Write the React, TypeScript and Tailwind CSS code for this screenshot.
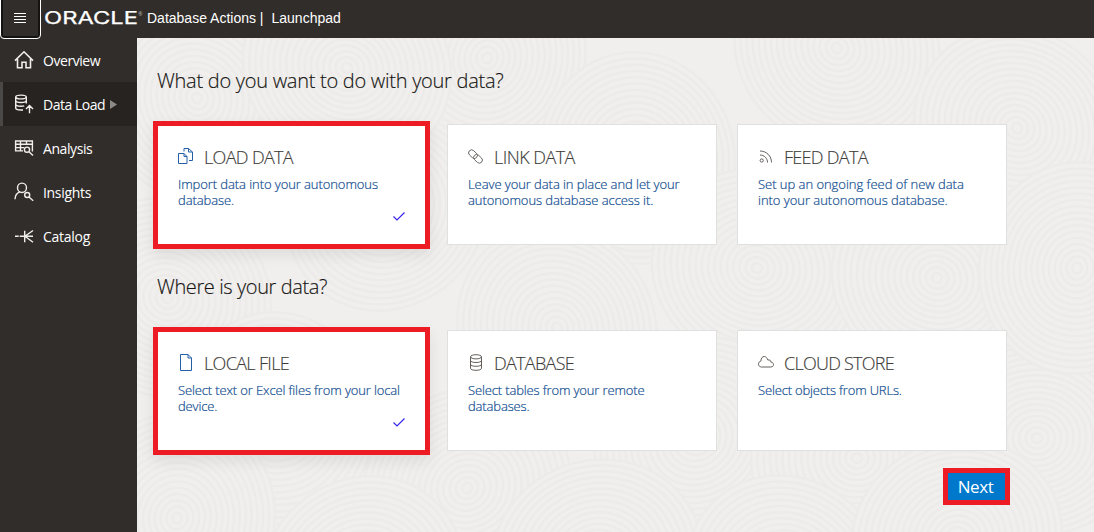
import type { ReactNode } from 'react';

function NavIcon({ children }: { children: ReactNode }) {
  return (
    <svg width="20" height="20" viewBox="0 0 20 20" fill="none" stroke="#f1efed" strokeWidth="1.4" className="shrink-0">
      {children}
    </svg>
  );
}

function CardIcon({ children, active }: { children: ReactNode; active?: boolean }) {
  return (
    <svg width="16" height="18" viewBox="0 0 16 18" fill="none" strokeWidth="1" className={active ? 'shrink-0 stroke-[#2560a6]' : 'shrink-0 stroke-[#65605c]'}>
      {children}
    </svg>
  );
}

const nav = [
  {
    label: 'Overview',
    tracking: 'tracking-[-0.45px]',
    icon: <path d="M1 10.6 10 1.800l9 8.800M3.500 9v8.800H8v-5.500h4v5.500h4.500V9" strokeWidth="1.600" />,
  },
  {
    label: 'Data Load',
    tracking: 'tracking-[-0.48px]',
    active: true,
    icon: (
      <>
        <ellipse cx="7" cy="3" rx="5.300" ry="1.900" />
        <path d="M1.700 3v11c0 1.200 2.200 2 5.300 2h2M12.300 3v6.500M1.700 6.500c0 1.200 2.300 2 5.300 2s5.300-.8 5.300-2M1.700 10.200c0 1.200 2.300 2 5.300 2 1.300 0 2.300-.1 3.200-.4M15.500 19.300v-7.500M12 15l3.500-3.500L19 15" />
      </>
    ),
  },
  {
    label: 'Analysis',
    tracking: 'tracking-[-0.42px]',
    icon: (
      <>
        <path d="M1 3h18M1 6.300h18M1 9.600h9M1 12.900h8M1.600 2.500v11M6.500 3v10.500M12.500 3v4M18.400 2.500v11" />
        <circle cx="13" cy="11.700" r="2.600" />
        <path d="m15 13.700 4 3.800" />
      </>
    ),
  },
  {
    label: 'Insights',
    tracking: 'tracking-[-0.32px]',
    icon: (
      <>
        <ellipse cx="8" cy="5.800" rx="4.500" ry="4.700" />
        <path d="M1 17.200c.2-3.800 1.900-6.400 4.800-7.400" />
        <circle cx="13.200" cy="13" r="2.500" />
        <path d="m15 15 4.200 3.800" />
      </>
    ),
  },
  {
    label: 'Catalog',
    tracking: 'tracking-[-0.27px]',
    icon: <path d="M1 10.300h3.700M5.700 10.300H19M10.700 4.800v11.500M19 4.500l-8 5.800 8 6" />,
  },
];

const files = <path d="M.5 5.500h5.500l3 3v7h-8.500ZM6 5.500v3h3M6 3.500v-3h4.500l4 3.500v8.500H11M10.500.5V4h4" />;
const file = <path d="M2.500 .500h7.500l3.500 3.500v12.500h-11ZM10 .500V4h3.500" />;
const link = (
  <g transform="rotate(43 7.5 8.500)" strokeWidth="0.9">
    <rect x="-0.800" y="5.500" width="9.800" height="6" rx="3" />
    <rect x="6" y="5.500" width="9.800" height="6" rx="3" />
  </g>
);
const feed = (
  <g>
    <circle cx="3.700" cy="12.500" r="1.600" />
    <path d="M2 7c4.200 0 7.500 3.200 7.500 7.500M2 3c6.500 0 11.500 5 11.500 11.500" />
  </g>
);
const database = (
  <g>
    <ellipse cx="8" cy="2.800" rx="5.500" ry="2.100" />
    <path d="M2.500 2.800v11.500c0 1.200 2.400 2 5.500 2s5.500-.8 5.500-2V2.800M2.500 6.500c0 1.200 2.400 2 5.500 2s5.500-.8 5.500-2M2.500 10.300c0 1.200 2.400 2 5.500 2s5.500-.8 5.500-2" />
  </g>
);
const cloud = (
  <path
    transform="translate(0 -1)"
    d="M3.500 14h9.300c1.600 0 2.700-1 2.700-2.400 0-1.500-1.100-2.500-2.600-2.500.1-1.700-1.600-2.700-3-2C9 5 7.900 3.500 6.400 3.500c-2 0-3.500 1.600-3.400 4.400C1.400 8.500.5 9.600.5 11.200.5 12.900 1.800 14 3.500 14Z"
  />
);

type CardProps = {
  title: string;
  titleTracking: string;
  lines: string[];
  tracking: string;
  icon: ReactNode;
  selected?: boolean;
};

function Card({ title, titleTracking, lines, tracking, icon, selected }: CardProps) {
  return (
    <button
      className={`flex flex-col bg-white text-left font-light ${
        selected
          ? '-my-1 mr-[-3px] -ml-1 h-[128px] w-[277px] border-[5px] border-[#ed1c24] pt-[20px] pl-[20px] shadow-[0_6px_14px_rgba(0,0,0,0.08)]'
          : 'my-[-1px] h-[121px] w-[270px] border border-[#dfe1e0] pt-[21px] pl-[20px]'
      }`}
    >
      <span className="flex h-[22px] items-center gap-[10px]">
        <CardIcon active={selected}>{icon}</CardIcon>
        <span className={`text-[18px] leading-[22px] text-[#403c38] [-webkit-text-stroke:0.15px] ${titleTracking}`}>{title}</span>
      </span>
      <span className={`mt-[8px] flex flex-col text-[13px] leading-4 text-[#0f4c8f] [-webkit-text-stroke:0.2px] ${tracking}`}>
        {lines.map((l) => (
          <span key={l} className="whitespace-nowrap">{l}</span>
        ))}
      </span>
      {selected && (
        <svg width="12" height="9" viewBox="0 0 12 9" fill="none" stroke="#3524f0" strokeWidth="1.200" className="mt-1 mr-[20px] self-end">
          <path d="m.500 4.500 3.500 3.500 7.500-7.500" />
        </svg>
      )}
    </button>
  );
}

const rings = Array.from({ length: 17 }, (_, i) => 106 - i * 6.3);
const centers = [
  [60, 60], [350, 20], [500, 120], [700, 10], [880, 90], [250, 170], [30, 260], [420, 290],
  [620, 230], [800, 240], [140, 380], [560, 400], [720, 420], [330, 450], [40, 480], [900, 400],
  [460, 520], [650, 540], [225, 540], [820, 500], [210, 30], [940, 230],
];

function Backdrop() {
  return (
    <svg className="absolute inset-0 h-full w-full" viewBox="0 0 957 494" aria-hidden="true">
      <rect width="957" height="494" fill="#f0efed" />
      {centers.map(([x, y]) => (
        <g key={`${x}-${y}`} fill="#f0efed" stroke="#ecebe9" strokeWidth="2.400">
          {rings.map((r) => (
            <ellipse key={r} cx={x} cy={y} rx={r} ry={r * 0.92} transform={`rotate(${(x * 7) % 180} ${x} ${y})`} />
          ))}
        </g>
      ))}
    </svg>
  );
}

export default function App() {
  return (
    <div className="flex h-[532px] w-[1094px] flex-col overflow-hidden bg-[#312d2a] font-['Open_Sans',sans-serif]">
      <header className="flex h-[38px] shrink-0 items-start text-white">
        <button className="-mt-1 flex h-[43px] w-[41px] shrink-0 items-center justify-center rounded border border-white bg-[#312d2a] pt-px pr-px shadow-[inset_0_0_0_2px_#151312]" aria-label="Menu">
          <svg width="12" height="11" viewBox="0 0 12 11" stroke="#fff" strokeWidth="1">
            <path d="M0 .5h12M0 3.500h12M0 6.500h12M0 9.500h12" />
          </svg>
        </button>
        <div className="ml-[3px] flex h-9 w-[98px] items-center pt-0.5">
          <span className="origin-left scale-x-[1.395] font-['Inter',sans-serif] text-[17px] [-webkit-text-stroke:0.25px]">ORACLE</span>
          <span className="-mt-2.5 ml-[27px] text-[5px] leading-none text-[#c0bebc]">®</span>
        </div>
        <div className="ml-[5px] flex h-9 items-center gap-2 font-['Liberation_Sans',sans-serif] text-sm whitespace-nowrap">
          <span>Database Actions |</span>
          <span>Launchpad</span>
        </div>
      </header>
      <div className="flex min-h-0 flex-1">
        <nav className="w-[137px] shrink-0">
          {nav.map((n) => (
            <div key={n.label} className={`flex h-11 items-center border-l-[3px] pl-[11px] text-sm text-white ${n.active ? 'border-[#4b4947] bg-[#272320]' : 'border-transparent'}`}>
              <NavIcon>{n.icon}</NavIcon>
              <span className={`ml-[9px] pt-0.5 whitespace-nowrap ${n.tracking}`}>{n.label}</span>
              {n.active && (
                <svg width="7" height="9" viewBox="0 0 7 9" fill="#8c8a88" className="ml-[5px]">
                  <path d="M0 0 7 4.500 0 9Z" />
                </svg>
              )}
            </div>
          ))}
        </nav>
        <main className="relative flex-1 bg-[#f0efed]">
          <Backdrop />
          <div className="relative flex h-full w-[873px] flex-col pt-[30px] pl-5">
            <h1 className="h-[26px] text-[20px] leading-[26px] font-light tracking-[-0.270px] text-[#161513] [-webkit-text-stroke:0.15px]">What do you want to do with your data?</h1>
            <div className="mt-[31px] flex h-[119px] gap-5">
              <Card selected icon={files} title="LOAD DATA" titleTracking="tracking-[-0.660px]" lines={['Import data into your autonomous', 'database.']} tracking="tracking-[-0.080px]" />
              <Card icon={link} title="LINK DATA" titleTracking="tracking-[-0.530px]" lines={['Leave your data in place and let your', 'autonomous database access it.']} tracking="tracking-[-0.070px]" />
              <Card icon={feed} title="FEED DATA" titleTracking="tracking-[-0.700px]" lines={['Set up an ongoing feed of new data', 'into your autonomous database.']} tracking="tracking-[-0.030px]" />
            </div>
            <h2 className="mt-[30px] h-[26px] text-[20px] leading-[26px] font-light tracking-[-0.400px] text-[#161513] [-webkit-text-stroke:0.15px]">Where is your data?</h2>
            <div className="mt-[31px] flex h-[119px] gap-5">
              <Card selected icon={file} title="LOCAL FILE" titleTracking="tracking-[-0.650px]" lines={['Select text or Excel files from your local', 'device.']} tracking="tracking-[-0.130px]" />
              <Card icon={database} title="DATABASE" titleTracking="tracking-[-0.700px]" lines={['Select tables from your remote', 'databases.']} tracking="tracking-[-0.140px]" />
              <Card icon={cloud} title="CLOUD STORE" titleTracking="tracking-[-0.740px]" lines={['Select objects from URLs.']} tracking="tracking-[-0.170px]" />
            </div>
            <button className="mt-[18px] flex h-[37px] w-[67px] shrink-0 items-center justify-center self-end border-[5px] border-[#ed1c24] bg-[#0079cc] pr-0.5 text-[17px] tracking-[-0.400px] text-white">
              Next
            </button>
          </div>
        </main>
      </div>
    </div>
  );
}
